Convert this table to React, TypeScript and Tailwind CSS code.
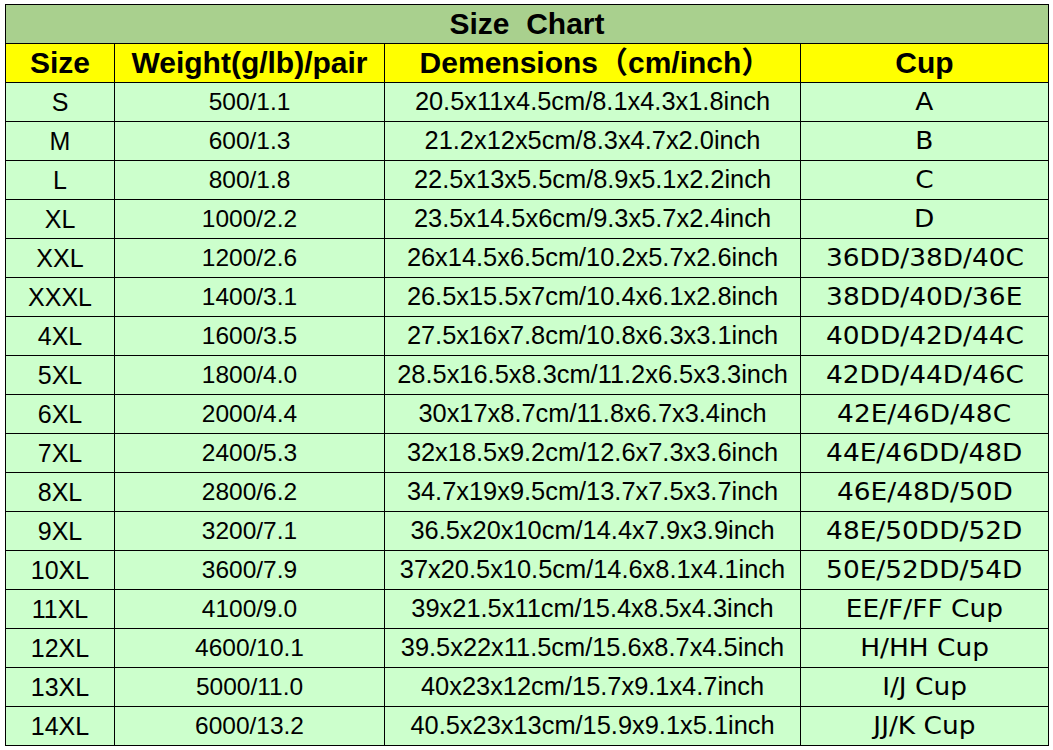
import React from "react";

const rows: [string, string, string, string][] = [
  ["S", "500/1.1", "20.5x11x4.5cm/8.1x4.3x1.8inch", "A"],
  ["M", "600/1.3", "21.2x12x5cm/8.3x4.7x2.0inch", "B"],
  ["L", "800/1.8", "22.5x13x5.5cm/8.9x5.1x2.2inch", "C"],
  ["XL", "1000/2.2", "23.5x14.5x6cm/9.3x5.7x2.4inch", "D"],
  ["XXL", "1200/2.6", "26x14.5x6.5cm/10.2x5.7x2.6inch", "36DD/38D/40C"],
  ["XXXL", "1400/3.1", "26.5x15.5x7cm/10.4x6.1x2.8inch", "38DD/40D/36E"],
  ["4XL", "1600/3.5", "27.5x16x7.8cm/10.8x6.3x3.1inch", "40DD/42D/44C"],
  ["5XL", "1800/4.0", "28.5x16.5x8.3cm/11.2x6.5x3.3inch", "42DD/44D/46C"],
  ["6XL", "2000/4.4", "30x17x8.7cm/11.8x6.7x3.4inch", "42E/46D/48C"],
  ["7XL", "2400/5.3", "32x18.5x9.2cm/12.6x7.3x3.6inch", "44E/46DD/48D"],
  ["8XL", "2800/6.2", "34.7x19x9.5cm/13.7x7.5x3.7inch", "46E/48D/50D"],
  ["9XL", "3200/7.1", "36.5x20x10cm/14.4x7.9x3.9inch", "48E/50DD/52D"],
  ["10XL", "3600/7.9", "37x20.5x10.5cm/14.6x8.1x4.1inch", "50E/52DD/54D"],
  ["11XL", "4100/9.0", "39x21.5x11cm/15.4x8.5x4.3inch", "EE/F/FF Cup"],
  ["12XL", "4600/10.1", "39.5x22x11.5cm/15.6x8.7x4.5inch", "H/HH Cup"],
  ["13XL", "5000/11.0", "40x23x12cm/15.7x9.1x4.7inch", "I/J Cup"],
  ["14XL", "6000/13.2", "40.5x23x13cm/15.9x9.1x5.1inch", "JJ/K Cup"],
];

const arial = "font-['Liberation_Sans','Arial','Noto_Sans_CJK_SC',sans-serif]";

export default function App() {
  return (
    <div className="w-[1053px] h-[750px] bg-white pt-[4px] pl-[5px]">
      <div
        className={`w-[1044px] grid grid-cols-[109px_270px_416px_248px] border-l border-t border-black text-black ${arial}`}
      >
        <div className="col-span-4 h-[39px] bg-[#a9d08e] border-r border-b border-black flex items-center justify-center text-[30px] font-bold whitespace-pre leading-none">
          {"Size  Chart"}
        </div>

        <div className="h-[39px] bg-[#ffff00] border-r border-b border-black flex items-center justify-center text-[30px] font-bold leading-none">
          Size
        </div>
        <div className="h-[39px] bg-[#ffff00] border-r border-b border-black flex items-center justify-center text-[30px] font-bold leading-none">
          Weight(g/lb)/pair
        </div>
        <div className="h-[39px] bg-[#ffff00] border-r border-b border-black flex items-center justify-center text-[30px] font-bold leading-none whitespace-nowrap pl-[6px]">
          Demensions（cm/inch）
        </div>
        <div className="h-[39px] bg-[#ffff00] border-r border-b border-black flex items-center justify-center text-[30px] font-bold leading-none">
          Cup
        </div>

        {rows.map((r) => (
          <React.Fragment key={r[0]}>
            <div className="h-[39px] bg-[#ccffcc] border-r border-b border-black flex items-center justify-center text-[25px] leading-none">
              {r[0]}
            </div>
            <div className="h-[39px] bg-[#ccffcc] border-r border-b border-black flex items-center justify-center text-[24.5px] leading-none">
              {r[1]}
            </div>
            <div className="h-[39px] bg-[#ccffcc] border-r border-b border-black flex items-center justify-center text-[25.4px] leading-none whitespace-nowrap">
              {r[2]}
            </div>
            <div className="h-[39px] bg-[#ccffcc] border-r border-b border-black flex items-center justify-center text-[24px] leading-none whitespace-nowrap font-['Verdana','DejaVu_Sans',sans-serif]">
              <span className="inline-block scale-x-[1.1]">{r[3]}</span>
            </div>
          </React.Fragment>
        ))}
      </div>
    </div>
  );
}
